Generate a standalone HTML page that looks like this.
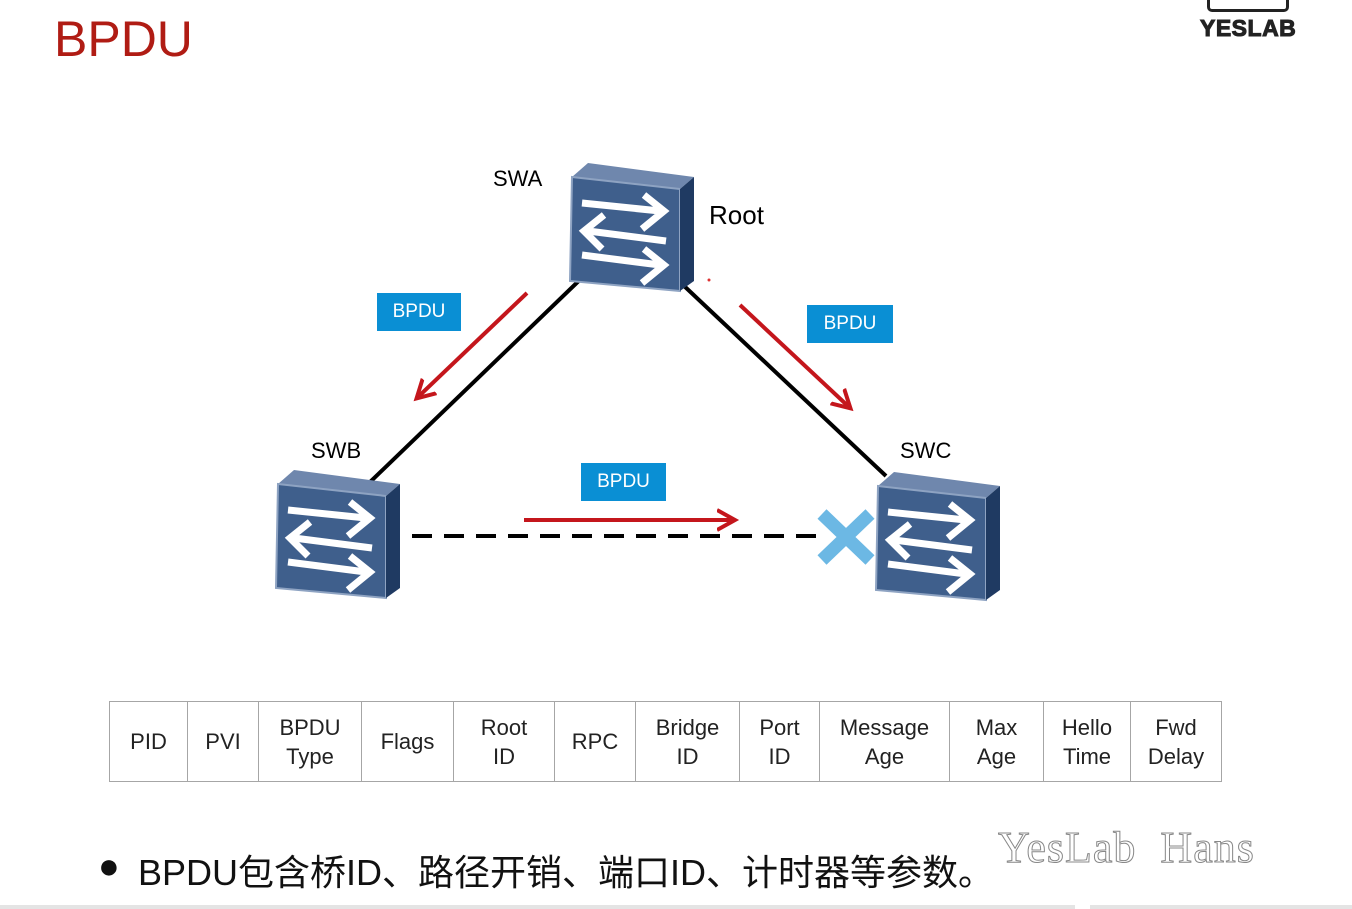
<!DOCTYPE html>
<html><head><meta charset="utf-8"><style>
body{margin:0;width:1352px;height:909px;background:#fff;overflow:hidden;position:relative;font-family:"Liberation Sans","Noto Sans CJK SC",sans-serif}
.t{position:absolute}
table{position:absolute;left:109px;top:701px;border-collapse:collapse;height:81px}
td{border:1px solid #a6a6a6;text-align:center;font-size:22px;color:#222;line-height:29px;padding:0}
.tag{position:absolute;background:#0a8fd4;color:#fff;font-size:19px;text-align:center;height:38px;line-height:38px}
</style></head><body>
<div class="t" style="left:54px;top:10px;font-size:50px;color:#b01c14">BPDU</div>
<div class="t" style="left:1207px;top:-12px;width:76px;height:18px;border:3px solid #222;border-radius:5px"></div>
<div class="t" style="left:1200px;top:15px;font-size:23px;font-weight:bold;color:#222;-webkit-text-stroke:1px #222;letter-spacing:0.5px">YESLAB</div>
<svg class="t" style="left:0;top:0" width="1352" height="909">
<defs>
<marker id="ah" markerWidth="6" markerHeight="6" refX="4" refY="3" orient="auto" markerUnits="strokeWidth"><path d="M0,0.5 L4.5,3 L0,5.5" fill="none" stroke="#c4161c" stroke-width="1"/></marker>
<g id="sw">
<polygon points="2,14 18,0 124,14 110,26" fill="#6f87ad"/>
<polygon points="2,14 110,26 110,128 0,118" fill="#3f5f8c" stroke="#8ea3c2" stroke-width="2"/>
<polygon points="110,26 124,14 124,118 110,128" fill="#1f3a62"/>
<g stroke="#fff" stroke-width="7" fill="none" stroke-linejoin="miter">
<path d="M12,40 L90,48 M74,32 L94,48 L72,66"/>
<path d="M96,78 L18,68 M34,52 L14,68 L32,86"/>
<path d="M12,92 L90,102 M74,86 L94,102 L72,120"/>
</g></g>
</defs>
<line x1="588" y1="272" x2="368" y2="484" stroke="#000" stroke-width="4"/>
<line x1="682" y1="284" x2="886" y2="476" stroke="#000" stroke-width="4"/>
<line x1="412" y1="536" x2="822" y2="536" stroke="#000" stroke-width="4" stroke-dasharray="20,12"/>
<line x1="527" y1="293" x2="418" y2="397" stroke="#c4161c" stroke-width="4" marker-end="url(#ah)"/>
<line x1="740" y1="305" x2="849" y2="407" stroke="#c4161c" stroke-width="4" marker-end="url(#ah)"/>
<line x1="524" y1="520" x2="733" y2="520" stroke="#c4161c" stroke-width="4" marker-end="url(#ah)"/>
<use href="#sw" x="570" y="163"/>
<use href="#sw" x="276" y="470"/>
<g stroke="#6cb8e4" stroke-width="13"><line x1="822" y1="514" x2="870" y2="560"/><line x1="870" y1="514" x2="822" y2="560"/></g>
<use href="#sw" x="876" y="472"/>
<circle cx="709" cy="280" r="1.5" fill="#d33"/>
</svg>
<div class="t" style="left:493px;top:166px;font-size:22px">SWA</div>
<div class="t" style="left:709px;top:200px;font-size:26px">Root</div>
<div class="t" style="left:311px;top:438px;font-size:22px">SWB</div>
<div class="t" style="left:900px;top:438px;font-size:22px">SWC</div>
<div class="tag" style="left:377px;top:293px;width:84px">BPDU</div>
<div class="tag" style="left:807px;top:305px;width:86px">BPDU</div>
<div class="tag" style="left:581px;top:463px;width:85px">BPDU</div>
<table><tr>
<td style="width:77px">PID</td><td style="width:70px">PVI</td><td style="width:102px">BPDU<br>Type</td><td style="width:91px">Flags</td><td style="width:100px">Root<br>ID</td><td style="width:80px">RPC</td><td style="width:103px">Bridge<br>ID</td><td style="width:79px">Port<br>ID</td><td style="width:129px">Message<br>Age</td><td style="width:93px">Max<br>Age</td><td style="width:86px">Hello<br>Time</td><td style="width:90px">Fwd<br>Delay</td>
</tr></table>
<div class="t" style="left:98px;top:845px;font-size:36px;color:#111">●</div>
<div class="t" style="left:138px;top:844px;font-size:36px;color:#111">BPDU包含桥ID、路径开销、端口ID、计时器等参数。</div>
<div class="t" style="left:998px;top:822px;font-size:44px;font-family:'Liberation Serif',serif;color:#fff;-webkit-text-stroke:1px #888;letter-spacing:1px">YesLab&nbsp; Hans</div>
<div class="t" style="left:0;top:905px;width:1075px;height:4px;background:#e4e4e4"></div>
<div class="t" style="left:1090px;top:905px;width:262px;height:4px;background:#e4e4e4"></div>
</body></html>
